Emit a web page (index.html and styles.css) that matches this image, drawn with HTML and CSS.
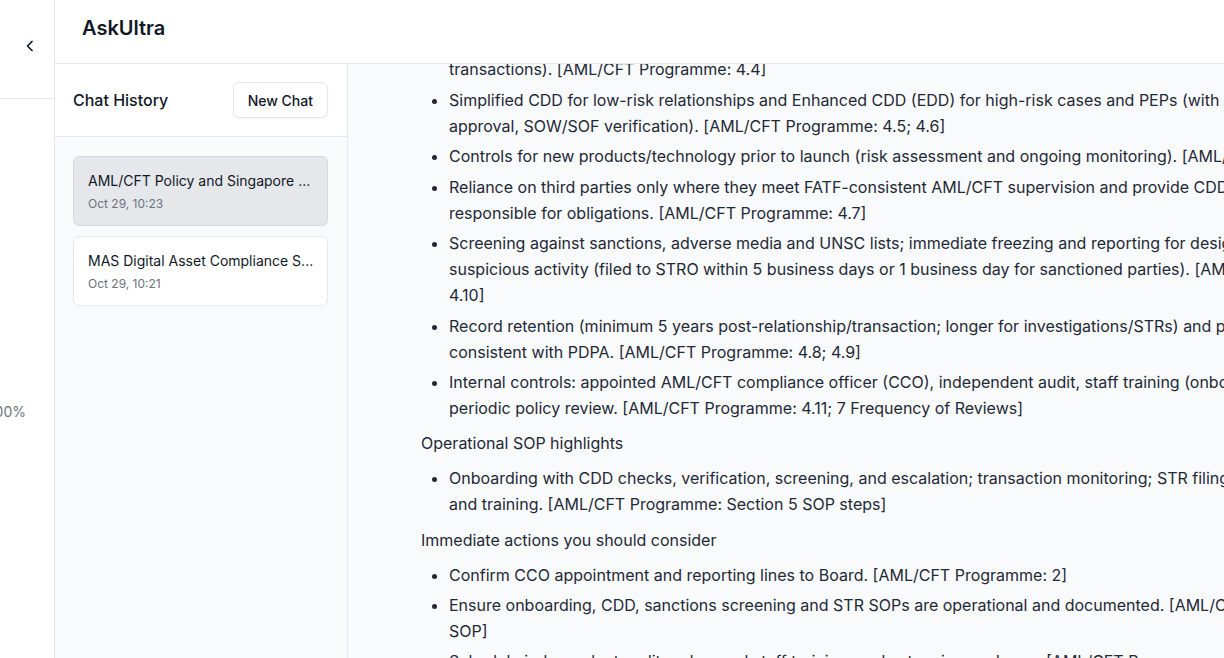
FILE: index.html
```html
<!DOCTYPE html>
<html lang="en">
<head>
<meta charset="utf-8">
<title>AskUltra</title>
<link rel="stylesheet" href="styles.css">
</head>
<body>
<div class="app">
  <aside class="rail">
    <div class="rail-top">
      <svg class="chev" width="16" height="16" viewBox="0 0 16 16" fill="none" stroke="#111827" stroke-width="1.7" stroke-linecap="round" stroke-linejoin="round"><path d="M10 3.5 5.5 8l4.5 4.5"/></svg>
    </div>
    <div class="rail-body">
      <span class="rail-pct">100%</span>
    </div>
  </aside>
  <div class="main">
    <header class="topbar">AskUltra</header>
    <div class="body">
      <section class="history">
        <div class="history-head">
          <h2 class="history-title">Chat History</h2>
          <button class="new-chat">New Chat</button>
        </div>
        <div class="history-list">
          <div class="chat-item active">
            <div class="chat-item-title">AML/CFT Policy and Singapore ...</div>
            <div class="chat-item-date">Oct 29, 10:23</div>
          </div>
          <div class="chat-item">
            <div class="chat-item-title">MAS Digital Asset Compliance S...</div>
            <div class="chat-item-date">Oct 29, 10:21</div>
          </div>
        </div>
      </section>
      <main class="chat">
        <div class="message">
          <ul>
            <li class="cont">transactions). [AML/CFT Programme: 4.4]</li>
            <li>Simplified CDD for low-risk relationships and Enhanced CDD (EDD) for high-risk cases and PEPs (with senior management<br>approval, SOW/SOF verification). [AML/CFT Programme: 4.5; 4.6]</li>
            <li>Controls for new products/technology prior to launch (risk assessment and ongoing monitoring). [AML/CFT Programme: 4.4]</li>
            <li>Reliance on third parties only where they meet FATF-consistent AML/CFT supervision and provide CDD data; firm remains<br>responsible for obligations. [AML/CFT Programme: 4.7]</li>
            <li>Screening against sanctions, adverse media and UNSC lists; immediate freezing and reporting for designated persons;<br>suspicious activity (filed to STRO within 5 business days or 1 business day for sanctioned parties). [AML/CFT Programme: 4.3;<br>4.10]</li>
            <li>Record retention (minimum 5 years post-relationship/transaction; longer for investigations/STRs) and protection<br>consistent with PDPA. [AML/CFT Programme: 4.8; 4.9]</li>
            <li>Internal controls: appointed AML/CFT compliance officer (CCO), independent audit, staff training (onboarding and annual),<br>periodic policy review. [AML/CFT Programme: 4.11; 7 Frequency of Reviews]</li>
          </ul>
          <p>Operational SOP highlights</p>
          <ul>
            <li>Onboarding with CDD checks, verification, screening, and escalation; transaction monitoring; STR filing; record-keeping;<br>and training. [AML/CFT Programme: Section 5 SOP steps]</li>
          </ul>
          <p class="gap">Immediate actions you should consider</p>
          <ul class="last">
            <li>Confirm CCO appointment and reporting lines to Board. [AML/CFT Programme: 2]</li>
            <li>Ensure onboarding, CDD, sanctions screening and STR SOPs are operational and documented. [AML/CFT Programme: Section 5<br>SOP]</li>
            <li>Schedule independent audit and annual staff training, and set review cadence. [AML/CFT Programme: 7]</li>
          </ul>
        </div>
      </main>
    </div>
  </div>
</div>
</body>
</html>
```
FILE: styles.css
```css
* { box-sizing: border-box; }
html, body {
  margin: 0;
  height: 100%;
  overflow: hidden;
}
body {
  font-family: Inter, "Noto Sans", "Liberation Sans", sans-serif;
  color: #111827;
  background: #ffffff;
}
.app {
  display: flex;
  height: 658px;
  width: 100%;
}
.rail {
  width: 55px;
  flex: none;
  border-right: 1px solid #e5e7eb;
  background: #ffffff;
  display: flex;
  flex-direction: column;
  overflow: hidden;
}
.rail-top {
  height: 99px;
  flex: none;
  border-bottom: 1px solid #e5e7eb;
  display: flex;
  justify-content: flex-end;
  padding: 38px 16px 0 0;
}
.chev { display: block; }
.rail-body {
  flex: 1;
  padding-top: 303px;
  display: flex;
  justify-content: flex-end;
  padding-right: 28px;
}
.rail-pct {
  font-size: 14px;
  line-height: 20px;
  color: #6b7280;
  white-space: nowrap;
}
.main {
  flex: 1;
  min-width: 0;
  display: flex;
  flex-direction: column;
}
.topbar {
  height: 64px;
  flex: none;
  border-bottom: 1px solid #e5e7eb;
  padding: 14px 0 0 27px;
  font-size: 20px;
  line-height: 28px;
  font-weight: 600;
  color: #111827;
  background: #ffffff;
}
.body {
  flex: 1;
  min-height: 0;
  display: flex;
}
.history {
  width: 293px;
  flex: none;
  border-right: 1px solid #e5e7eb;
  background: #f9fafb;
  display: flex;
  flex-direction: column;
}
.history-head {
  height: 73px;
  flex: none;
  background: #ffffff;
  border-bottom: 1px solid #e5e7eb;
  display: flex;
  align-items: center;
  justify-content: space-between;
  padding: 0 19px 0 18px;
}
.history-title {
  margin: 0;
  font-size: 16px;
  font-weight: 500;
  color: #111827;
}
.new-chat {
  font-family: inherit;
  font-size: 14px;
  font-weight: 500;
  color: #111827;
  background: #ffffff;
  border: 1px solid #e5e7eb;
  border-radius: 6px;
  height: 36px;
  padding: 0 14px;
  box-shadow: 0 1px 2px rgba(0, 0, 0, 0.04);
}
.history-list {
  display: flex;
  flex-direction: column;
  gap: 10px;
  padding: 19px 19px 18px 18px;
}
.chat-item {
  background: #ffffff;
  border: 1px solid #e5e7eb;
  border-radius: 6px;
  padding: 14px 14px 14px 14px;
  height: 70px;
}
.chat-item.active {
  background: #e5e7eb;
  border-color: #d6d9de;
}
.chat-item-title {
  font-size: 14px;
  line-height: 20px;
  color: #111827;
  white-space: nowrap;
  overflow: hidden;
}
.chat-item-date {
  margin-top: 5px;
  font-size: 12px;
  line-height: 16px;
  color: #6b7280;
}
.chat {
  flex: 1;
  min-width: 0;
  overflow: hidden;
  background: #f9fafb;
  padding-left: 73px;
}
.message {
  margin-top: -8px;
  font-size: 16px;
  line-height: 26px;
  color: #1f2937;
  white-space: nowrap;
}
.message ul {
  margin: 9px 0;
  padding-left: 28px;
}
.message ul:first-child { margin-top: 0; }
.message li + li { margin-top: 4.5px; }
.message ul.last li + li { margin-top: 4px; }
.message li.cont { list-style: none; }
.message p { margin: 0; }
.message p.gap { padding-top: 1px; }
```
